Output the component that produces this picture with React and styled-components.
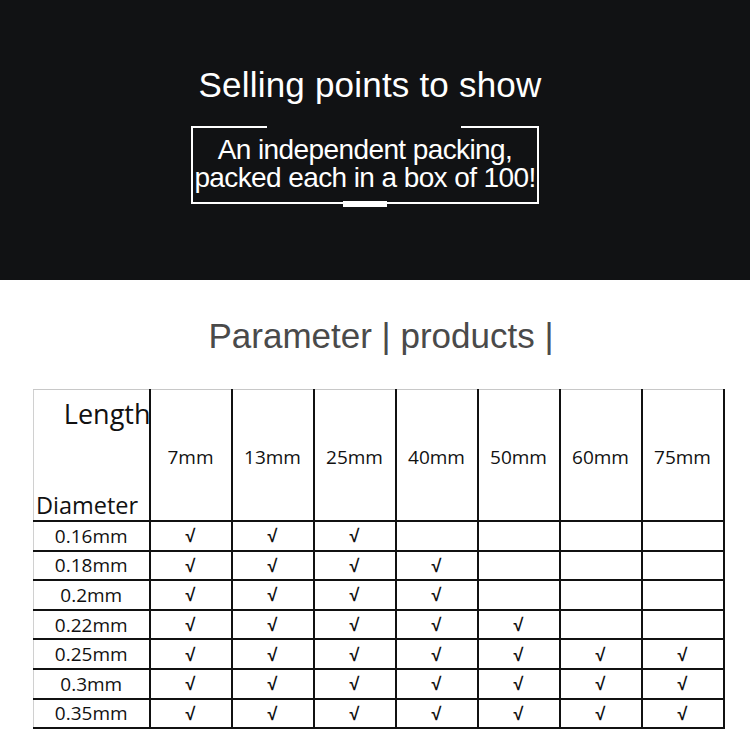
import styled, { createGlobalStyle } from "styled-components";

const GlobalStyle = createGlobalStyle`
  html, body {
    margin: 0;
    padding: 0;
    background: #ffffff;
  }
  body {
    font-family: "Liberation Sans", Arial, sans-serif;
  }
`;

const Page = styled.div`
  width: 750px;
  height: 746px;
  overflow: hidden;
  background: #ffffff;
`;

const Banner = styled.section`
  height: 280px;
  background: #111214;
  display: flex;
  flex-direction: column;
  align-items: center;
  padding-top: 67px;
  box-sizing: border-box;
`;

const BannerTitle = styled.h1`
  margin: 0;
  padding-right: 10px;
  font-family: "Liberation Sans", Arial, sans-serif;
  font-weight: 400;
  font-size: 35px;
  line-height: 35px;
  letter-spacing: 0.2px;
  color: #ffffff;
`;

const Frame = styled.div`
  position: relative;
  margin-top: 24px;
  margin-right: 20px;
  width: 348px;
  box-sizing: border-box;
  border: 2px solid #ffffff;
  border-top: none;
  padding-bottom: 10px;
`;

const TopEdge = styled.div`
  display: flex;
  justify-content: space-between;
  margin: 0 -2px;
`;

const EdgePiece = styled.span`
  display: block;
  width: ${(p) => p.$w}px;
  height: 2px;
  background: #ffffff;
`;

const FrameText = styled.p`
  margin: 8px 0 0;
  text-align: center;
  font-size: 28px;
  line-height: 28px;
  letter-spacing: -0.6px;
  color: #ffffff;
  white-space: nowrap;
`;

const FrameBar = styled.span`
  position: absolute;
  left: 150px;
  bottom: -5px;
  width: 44px;
  height: 6px;
  background: #ffffff;
`;

const Section = styled.section`
  display: flex;
  flex-direction: column;
  align-items: flex-start;
  padding: 38px 0 0 33px;
`;

const SectionTitle = styled.h2`
  align-self: center;
  margin: 0 0 35px;
  padding-right: 21px;
  font-family: "Liberation Sans", Arial, sans-serif;
  font-weight: 400;
  font-size: 35px;
  line-height: 36px;
  color: #4a4a4a;
`;

const Table = styled.table`
  border-collapse: collapse;
  table-layout: fixed;
  width: 689px;
  font-family: "Open Sans", "Noto Sans", sans-serif;
  color: #111111;

  td, th {
    padding: 0;
    border: 2px solid #111111;
    text-align: center;
    font-weight: 400;
  }
  tr:first-child > * {
    border-top: 1px solid #c8c8c8;
  }
  tr > *:first-child {
    border-left: 1px solid #d0d0d0;
  }
`;

const HeadCell = styled.th`
  height: 130px;
  font-size: 19px;
`;

const HeadLabel = styled.span`
  display: block;
  padding-top: 4px;
`;

const CornerCell = styled.th`
  height: 130px;
  width: ${(p) => p.$w}px;
`;

const Corner = styled.div`
  height: 130px;
  display: flex;
  flex-direction: column;
  justify-content: space-between;
`;

const CornerTop = styled.span`
  align-self: flex-end;
  margin-right: -2px;
  margin-top: 8px;
  font-size: 27px;
  line-height: 32px;
`;

const CornerBottom = styled.span`
  align-self: flex-start;
  margin-left: 2px;
  margin-bottom: 1px;
  font-size: 23.5px;
  line-height: 28px;
`;

const Cell = styled.td`
  height: 27.6px;
  font-size: 19px;
  line-height: 26px;
`;

const Tick = styled.span`
  font-family: "Liberation Sans", Arial, sans-serif;
  font-weight: 700;
  font-size: 18px;
`;

const lengths = ["7mm", "13mm", "25mm", "40mm", "50mm", "60mm", "75mm"];

const rows = [
  { d: "0.16mm", n: 3 },
  { d: "0.18mm", n: 4 },
  { d: "0.2mm", n: 4 },
  { d: "0.22mm", n: 5 },
  { d: "0.25mm", n: 7 },
  { d: "0.3mm", n: 7 },
  { d: "0.35mm", n: 7 },
];

export default function App() {
  return (
    <Page>
      <GlobalStyle />
      <Banner>
        <BannerTitle>Selling points to show</BannerTitle>
        <Frame>
          <TopEdge>
            <EdgePiece $w={76} />
            <EdgePiece $w={78} />
          </TopEdge>
          <FrameText>
            An independent packing,
            <br />
            packed each in a box of 100!
          </FrameText>
          <FrameBar />
        </Frame>
      </Banner>

      <Section>
        <SectionTitle>Parameter | products |</SectionTitle>
        <Table>
          <colgroup>
            <col style={{ width: 116 }} />
            {lengths.map((l) => (
              <col key={l} style={{ width: 82 }} />
            ))}
          </colgroup>
          <tbody>
            <tr>
              <CornerCell $w={116}>
                <Corner>
                  <CornerTop>Length</CornerTop>
                  <CornerBottom>Diameter</CornerBottom>
                </Corner>
              </CornerCell>
              {lengths.map((l) => (
                <HeadCell key={l}>
                  <HeadLabel>{l}</HeadLabel>
                </HeadCell>
              ))}
            </tr>
            {rows.map((r) => (
              <tr key={r.d}>
                <Cell>{r.d}</Cell>
                {lengths.map((l, i) => (
                  <Cell key={l}>{i < r.n ? <Tick>√</Tick> : null}</Cell>
                ))}
              </tr>
            ))}
          </tbody>
        </Table>
      </Section>
    </Page>
  );
}
